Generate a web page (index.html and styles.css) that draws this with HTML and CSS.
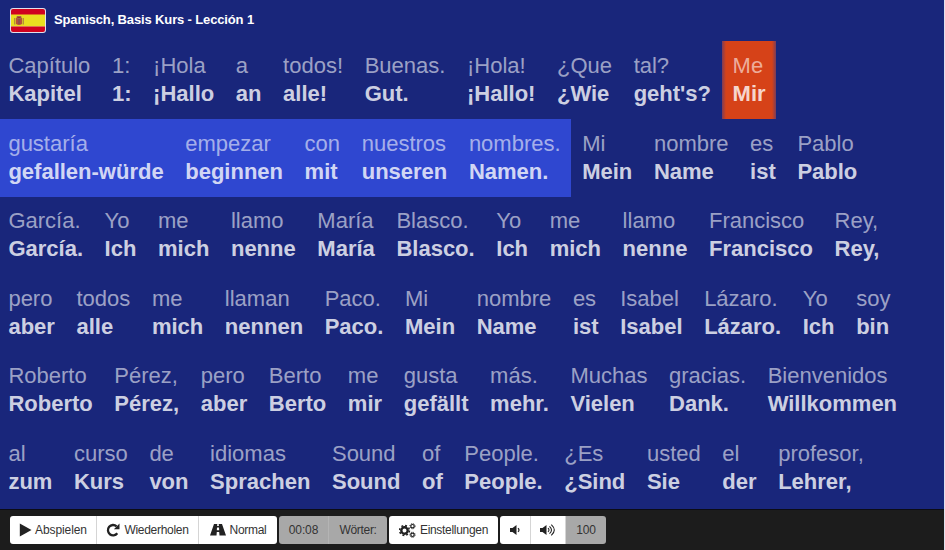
FILE: index.html
```html
<!DOCTYPE html>
<html lang="de">
<head>
<meta charset="utf-8">
<title>Spanisch, Basis Kurs - Lección 1</title>
<link rel="stylesheet" href="styles.css">
</head>
<body>
<header class="header">
<svg class="flag" viewBox="0 0 36 25"><rect width="36" height="25" rx="3" fill="#dfe0ec"/><path d="M1 7V3q0-2 2-2h30q2 0 2 2v4z" fill="#d0021f"/><path d="M1 6.500h34v12H1z" fill="#e9df20"/><path d="M1 18.500h34V22q0 2-2 2H3q-2 0-2-2z" fill="#d0021f"/><path d="M6 10h6v6q-3 2-6 0z" fill="#b7513a"/><path d="M7 8.500h4v2H7zM4.800 10v6.500M13.200 10v6.500" stroke="#a06a48" fill="#a52b29"/><path d="M9 11v5" stroke="#6b5260"/></svg>
<h1 class="title">Spanisch, Basis Kurs - Lección 1</h1>
</header>
<main class="lesson">
<div class="row"><p class="word">Capítulo<b>Kapitel</b></p><p class="word">1:<b>1:</b></p><p class="word">¡Hola<b>¡Hallo</b></p><p class="word">a<b>an</b></p><p class="word">todos!<b>alle!</b></p><p class="word">Buenas.<b>Gut.</b></p><p class="word">¡Hola!<b>¡Hallo!</b></p><p class="word">¿Que<b>¿Wie</b></p><p class="word">tal?<b>geht's?</b></p><p class="word current">Me<b>Mir</b></p></div>
<div class="row"><div class="phrase"><p class="word">gustaría<b>gefallen-würde</b></p><p class="word">empezar<b>beginnen</b></p><p class="word">con<b>mit</b></p><p class="word">nuestros<b>unseren</b></p><p class="word">nombres.<b>Namen.</b></p></div><p class="word">Mi<b>Mein</b></p><p class="word">nombre<b>Name</b></p><p class="word">es<b>ist</b></p><p class="word">Pablo<b>Pablo</b></p></div>
<div class="row"><p class="word">García.<b>García.</b></p><p class="word">Yo<b>Ich</b></p><p class="word">me<b>mich</b></p><p class="word">llamo<b>nenne</b></p><p class="word">María<b>María</b></p><p class="word">Blasco.<b>Blasco.</b></p><p class="word">Yo<b>Ich</b></p><p class="word">me<b>mich</b></p><p class="word">llamo<b>nenne</b></p><p class="word">Francisco<b>Francisco</b></p><p class="word">Rey,<b>Rey,</b></p></div>
<div class="row"><p class="word">pero<b>aber</b></p><p class="word">todos<b>alle</b></p><p class="word">me<b>mich</b></p><p class="word">llaman<b>nennen</b></p><p class="word">Paco.<b>Paco.</b></p><p class="word">Mi<b>Mein</b></p><p class="word">nombre<b>Name</b></p><p class="word">es<b>ist</b></p><p class="word">Isabel<b>Isabel</b></p><p class="word">Lázaro.<b>Lázaro.</b></p><p class="word">Yo<b>Ich</b></p><p class="word">soy<b>bin</b></p></div>
<div class="row"><p class="word">Roberto<b>Roberto</b></p><p class="word">Pérez,<b>Pérez,</b></p><p class="word">pero<b>aber</b></p><p class="word">Berto<b>Berto</b></p><p class="word">me<b>mir</b></p><p class="word">gusta<b>gefällt</b></p><p class="word">más.<b>mehr.</b></p><p class="word">Muchas<b>Vielen</b></p><p class="word">gracias.<b>Dank.</b></p><p class="word">Bienvenidos<b>Willkommen</b></p></div>
<div class="row"><p class="word">al<b>zum</b></p><p class="word">curso<b>Kurs</b></p><p class="word">de<b>von</b></p><p class="word">idiomas<b>Sprachen</b></p><p class="word">Sound<b>Sound</b></p><p class="word">of<b>of</b></p><p class="word">People.<b>People.</b></p><p class="word">¿Es<b>¿Sind</b></p><p class="word">usted<b>Sie</b></p><p class="word">el<b>der</b></p><p class="word">profesor,<b>Lehrer,</b></p></div>
</main>
<footer class="toolbar">
<div class="group main-group">
<button class="btn play"><svg width="13" height="14" viewBox="0 0 13 14"><path d="M.8.5 12.500 7 .8 13.500z"/></svg>Abspielen</button>
<button class="btn repeat"><svg width="14" height="14" viewBox="0 0 14 14"><path d="M11.300 10.300A5.200 5.200 0 1 1 10.600 3.300" fill="none" stroke="#222" stroke-width="2.300"/><path d="M13.500.6V6.200H7.900z"/></svg>Wiederholen</button>
<button class="btn speed"><svg width="16" height="12" viewBox="0 0 16 12"><path d="M4 0h3.300l-.2 2h1.800l-.2-2H12l4 11.500H9.500L9.200 8H6.800l-.3 3.500H0zM7 3.500 6.800 6.300h2.400L9 3.500z" fill-rule="evenodd"/></svg>Normal</button>
</div>
<div class="group status-group"><span class="btn info time">00:08</span><span class="btn info words">Wörter:</span></div>
<div class="group settings-group"><button class="btn settings"><svg width="17" height="15" viewBox="0 0 17 15"><circle cx="5.500" cy="7.500" r="3.200" fill="none" stroke="#222" stroke-width="2.400"/><circle cx="5.500" cy="7.500" r="4.900" fill="none" stroke="#222" stroke-width="1.600" stroke-dasharray="1.925"/><g fill="none" stroke="#222"><circle cx="13.500" cy="3.200" r="1.700" stroke-width="1.200"/><circle cx="13.500" cy="3.200" r="2.600" stroke-dasharray="1.020"/><circle cx="13.500" cy="11.800" r="1.700" stroke-width="1.200"/><circle cx="13.500" cy="11.800" r="2.600" stroke-dasharray="1.020"/></g></svg>Einstellungen</button></div>
<div class="group volume-group">
<button class="btn quieter" aria-label="Leiser"><svg width="11" height="10" viewBox="0 0 11 10"><path d="M0 3h2.500L6.500 0v10l-4-3H0z"/><path d="M8 3.200q2 1.800 0 3.600" fill="none" stroke="#222" stroke-width="1.200"/></svg></button>
<button class="btn louder" aria-label="Lauter"><svg width="16" height="12" viewBox="0 0 16 12"><path d="M0 4h2.500l4-3v10l-4-3H0z"/><path d="M8 4.200q2 1.800 0 3.600M9.500 2.300q4 3.700 0 7.400M11.300.6q6 5.400 0 10.800" fill="none" stroke="#222" stroke-width="1.100"/></svg></button>
<span class="btn info level">100</span>
</div>
</footer>
</body>
</html>
```
FILE: styles.css
```css
* { box-sizing: border-box; }
body {
  margin: 0;
  width: 945px;
  height: 550px;
  overflow: hidden;
  display: flex;
  flex-direction: column;
  background: #19267b;
  border-right: 1px solid #dfe1ee;
  font-family: "Liberation Sans", Arial, sans-serif;
}
.header {
  height: 41px;
  flex: none;
  display: flex;
  align-items: flex-start;
  padding: 8px 0 0 10px;
}
.flag { width: 36px; height: 25px; }
.title {
  margin: 4px 0 0 8px;
  font-size: 13px;
  line-height: 16px;
  letter-spacing: -0.14px;
  color: #fff;
  white-space: nowrap;
}
.lesson { height: 468px; flex: none; }
.row { display: flex; height: 77.5px; padding-left: 8.4px; }
.word {
  flex: none;
  height: 78px;
  margin: 0;
  padding: 11px 10.8px 0;
  font-size: 22px;
  line-height: 28px;
  color: rgba(255, 255, 255, .58);
  white-space: nowrap;
}
.row > .word:first-child { padding-left: 0; }
.word b { display: block; color: rgba(255, 255, 255, .8); }
.current {
  background: linear-gradient(90deg, #7b3c58, #d64218 4px, #d64218 calc(100% - 4px), #7b3c58);
}
.phrase {
  display: flex;
  height: 78px;
  margin-left: -8.4px;
  padding-left: 8.4px;
  background: #2f47d0;
}
.phrase .word:first-child { padding-left: 0; }
.toolbar {
  height: 41px;
  flex: none;
  display: flex;
  padding: 6px 0 0 10px;
  background: #1c1c1c;
  border-top: 1px solid #0c0c16;
}
.group { display: flex; height: 28px; border-radius: 3px; overflow: hidden; }
.btn {
  display: flex;
  align-items: center;
  justify-content: center;
  gap: 4px;
  padding: 0;
  border: 0;
  border-right: 1px solid #d5d5d5;
  background: #fff;
  font: 12px "Liberation Sans", Arial, sans-serif;
  letter-spacing: -0.3px;
  color: #333;
  white-space: nowrap;
}
.btn:last-child { border-right: 0; }
.btn svg { flex: none; fill: #222; }
.info { background: #a8a8a8; border-color: #b4b4b4; color: #333; }
.main-group { width: 267px; }
.status-group { width: 108px; margin-left: 2px; }
.settings-group { width: 109px; margin-left: 2px; }
.volume-group { width: 106px; margin-left: 2px; }
.play { width: 87px; gap: 3px; letter-spacing: -0.1px; }
.repeat { width: 102px; }
.speed { width: 78px; }
.time { width: 50px; letter-spacing: -0.1px; }
.words { width: 58px; }
.settings { width: 109px; }
.quieter { width: 31px; }
.louder { width: 35px; }
.level { width: 40px; letter-spacing: -0.1px; }
```
